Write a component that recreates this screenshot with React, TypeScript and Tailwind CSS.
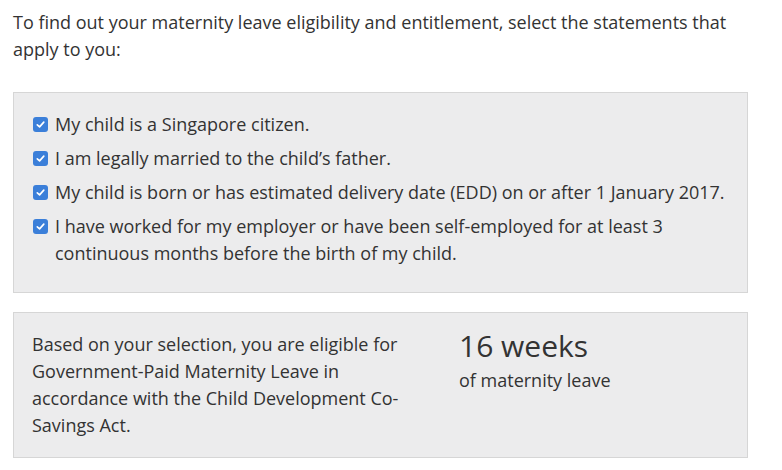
function CheckBox() {
  return (
    <span className="mt-[6px] flex h-[15px] w-[15px] shrink-0 items-center justify-center rounded-[3px] bg-[#3b7fd9]">
      <svg viewBox="0 0 12 12" className="h-[11px] w-[11px]" fill="none">
        <path d="M2.5 6.3 L5 8.6 L9.6 3.4" stroke="white" strokeWidth="1.8" strokeLinecap="round" strokeLinejoin="round" />
      </svg>
    </span>
  );
}

const statements = [
  "My child is a Singapore citizen.",
  "I am legally married to the child\u2019s father.",
  "My child is born or has estimated delivery date (EDD) on or after 1 January 2017.",
  "I have worked for my employer or have been self-employed for at least 3 continuous months before the birth of my child.",
];

export default function App() {
  return (
    <div
      className="h-[470px] w-[782px] overflow-hidden bg-white text-[18px] leading-[27px] text-[#333333]"
      style={{ fontFamily: '"Open Sans", "Noto Sans", sans-serif' }}
    >
      <div className="w-[748px] pl-[13px] pt-[9px]">
        <p className="w-[725px]">
          To find out your maternity leave eligibility and entitlement, select the statements that apply to you:
        </p>

        <div className="mt-[29px] flex flex-col gap-[7px] border border-[#d6d6d6] bg-[#ececed] pb-[25px] pl-[19px] pr-[10px] pt-[18px]">
          {statements.map((s) => (
            <div key={s} className="flex gap-[7px]">
              <CheckBox />
              <span>{s}</span>
            </div>
          ))}
        </div>

        <div className="mt-[19px] flex h-[146px] border border-[#d6d6d6] bg-[#ececed] pl-[18px] pt-[18px]">
          <p className="w-[390px]">
            Based on your selection, you are eligible for Government-Paid Maternity Leave in accordance with the Child Development Co-Savings Act.
          </p>
          <div className="-mt-[3px] ml-[37px]">
            <div className="text-[30px] leading-[36px]">16 weeks</div>
            <div className="mt-[3px]">of maternity leave</div>
          </div>
        </div>
      </div>
    </div>
  );
}
